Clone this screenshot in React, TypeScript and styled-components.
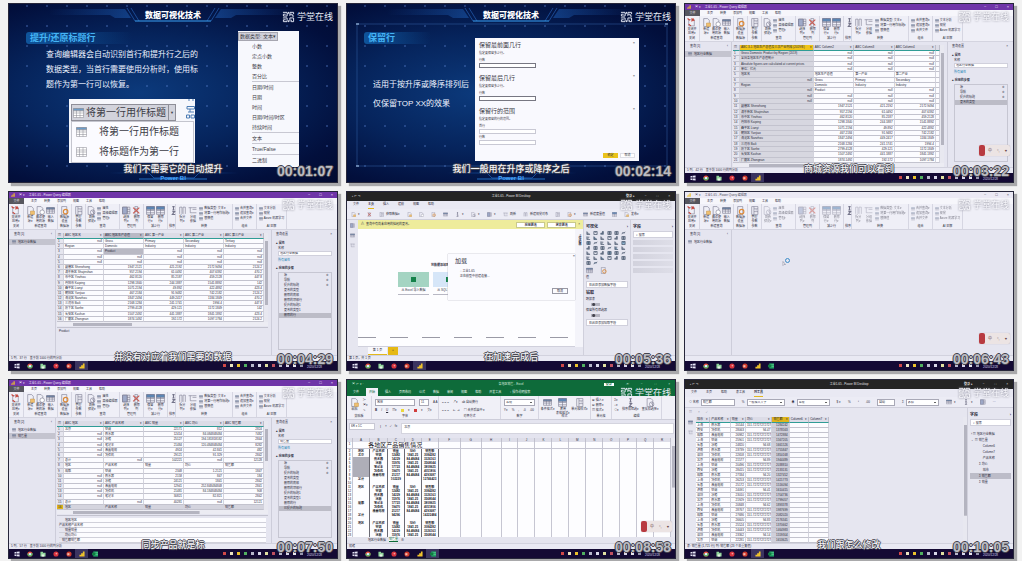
import React from "react";
import styled, { createGlobalStyle, css } from "styled-components";

const GlobalStyle = createGlobalStyle`
  * { box-sizing: border-box; }
  body {
    margin: 0;
    background: #f2f2f2;
    font-family: "Liberation Sans", "Noto Sans CJK SC", sans-serif;
    line-height: 1;
    color: #2c2c3c;
  }
  button, input, select { font: inherit; color: inherit; margin: 0; border-radius: 0; }
  button { border: 0; padding: 0; background: none; }
  p, h2, h3, ul, figure { margin: 0; padding: 0; }
  ul { list-style: none; }
  a { text-decoration: none; }
  table { border-spacing: 0; }
  td, th { padding: 0; font-weight: 400; }
  svg { display: block; flex: none; }
`;

/* ---------- gallery ---------- */

const Gallery = styled.main`
  display: grid;
  grid-template-columns: repeat(3, 1fr);
  gap: 8px;
  padding: 3px 8px 2px;
`;

const Frame = styled.figure`
  position: relative;
  display: flex;
  flex-direction: column;
  aspect-ratio: 330 / 180;
  min-width: 0;
  overflow: hidden;
  border: 1px solid #26263a;
  font-size: 3px;
`;

const Shadow = styled.div`
  min-width: 0;
  box-shadow: 3px 3px 1px #a9a9ab;
`;

const outline = css`
  text-shadow: 1px 0 0 #44444e, -1px 0 0 #44444e, 0 1px 0 #44444e, 0 -1px 0 #44444e;
`;

const Caption = styled.figcaption`
  position: absolute;
  left: 0;
  right: 0;
  bottom: 8px;
  text-align: center;
  font-size: 9px;
  font-weight: 500;
  color: #f4f4f8;
  ${outline}
`;

const Timecode = styled.time`
  position: absolute;
  right: 4px;
  bottom: 4px;
  font-size: 14px;
  font-weight: 700;
  color: #bcbcc2;
  ${outline}
`;

const Mark = styled.div<{ $light?: boolean }>`
  position: absolute;
  right: 4px;
  top: 7px;
  display: flex;
  align-items: center;
  gap: 2px;
  font-size: 9px;
  color: ${(p) => (p.$light ? "#f6f6fb" : "#e8edf8")};
  filter: ${(p) => (p.$light ? "drop-shadow(0 0 1px #80808f)" : "none")};
`;

const Watermark = ({ light }: { light?: boolean }) => (
  <Mark $light={light}>
    <svg width="13" height="12" viewBox="0 0 28 24" fill="none" stroke="currentColor" strokeWidth="2">
      <path d="M2 2h9v8H3V6h5M17 10V2h8v4M17 6h5v4h4M2 14h9v8H3v-4h5M17 22v-8h8v8h-5v-4M11 5h2M14 1v4M14 19v4" />
    </svg>
    学堂在线
  </Mark>
);

type ShotProps = {
  time: string;
  caption?: string;
  light?: boolean;
  ime?: boolean;
  children: React.ReactNode;
};

const Ime = styled.div`
  position: absolute;
  right: 3px;
  bottom: 26px;
  display: flex;
  width: 31px;
  height: 11px;
  align-items: center;
  gap: 5px;
  border-radius: 2px;
  background: #ece4e4;
  box-shadow: 0 0 1px #a8a0a8;
  font-size: 4px;
  color: #6a4444;
  &::before {
    content: "";
    width: 6px;
    height: 11px;
    margin-right: -2px;
    border-radius: 2px;
    background: #b83a40;
  }
`;

const Shot = ({ time, caption, light, ime, children }: ShotProps) => (
  <Shadow>
    <Frame>
      {children}
      {ime && (
        <Ime>
          <span>中</span>
          <span>°,</span>
          <span>♥</span>
        </Ime>
      )}
      <Watermark light={light} />
      {caption && <Caption>{caption}</Caption>}
      <Timecode>{time}</Timecode>
    </Frame>
  </Shadow>
);

/* ---------- slides ---------- */

const Slide = styled.div`
  flex: 1;
  position: relative;
  display: flex;
  flex-direction: column;
  background:
    radial-gradient(circle, rgba(90, 130, 210, 0.35) 0 1px, transparent 1px) 8px 12px / 20px 20px,
    radial-gradient(ellipse at 40% 50%, #0c3a7c 0%, #06245c 45%, #020f3c 80%, #010a30 100%);
  color: #eef3ff;
`;

const Hud = styled.svg`
  position: absolute;
  inset: 0;
  width: 100%;
  height: 100%;
`;

const SlideHud = ({ framed }: { framed?: boolean }) => (
  <Hud viewBox="0 0 328 178" preserveAspectRatio="none" fill="none">
    <defs>
      <linearGradient id="beam" x1="0" x2="1">
        <stop offset="0" stopColor="#1c62c0" stopOpacity="0" />
        <stop offset=".5" stopColor="#2a7ade" stopOpacity=".9" />
        <stop offset="1" stopColor="#1c62c0" stopOpacity="0" />
      </linearGradient>
    </defs>
    <path d="M40 5h76l6 9h-16l-5-3H40zM288 5h-76l-6 9h16l5-3h61z" fill="url(#beam)" opacity=".7" />
    <path d="M118 4l8 13M122 4l8 13M210 4l-8 13M206 4l-8 13" stroke="#2a6ac4" opacity=".6" />
    <path d="M126 17h76" stroke="#3aa0f4" />
    <path d="M100 169h40l5 5h40l5-5h40" stroke="url(#beam)" />
    <path d="M130 175h68" stroke="#2a86e0" opacity=".8" />
    {framed && <rect x="10" y="20" width="310" height="142" stroke="#3a6cb4" opacity=".45" />}
    {framed && <path d="M9 20h3M9 162h3M318 20h3" stroke="#bcdcff" />}
  </Hud>
);

const SlideTitle = styled.h2`
  position: relative;
  padding-top: 7px;
  text-align: center;
  font-size: 8px;
  line-height: 9px;
  font-weight: 900;
  color: #ffffff;
`;

const SlideHeading = styled.h3`
  position: relative;
  align-self: flex-start;
  margin: 12px 0 0 17px;
  padding: 0 36px 0 4px;
  font-size: 9px;
  line-height: 12px;
  font-weight: 700;
  color: #45b4f4;
  border-radius: 3px;
  background: linear-gradient(90deg, #0f559c, rgba(15, 85, 156, 0));
`;

const SlideFoot = styled.p`
  position: absolute;
  left: 0;
  right: 0;
  bottom: 1px;
  text-align: center;
  font-size: 6px;
  font-weight: 700;
  color: #4aa8ff;
`;

const SlideText = styled.p<{ $line: number; $top: number; $left: number }>`
  position: relative;
  margin: ${(p) => p.$top}px 0 0 ${(p) => p.$left}px;
  font-size: 8px;
  line-height: ${(p) => p.$line}px;
  white-space: pre-line;
`;

const PromoteShot = styled.div`
  position: absolute;
  left: 60px;
  top: 95px;
  width: 126px;
  height: 64px;
  padding: 5px 1px 0 2px;
  background: #f6f7fc;
  color: #3c3c46;
  font-size: 10px;
`;

const Combo = styled.button`
  display: flex;
  align-items: center;
  gap: 2px;
  width: 105px;
  height: 17px;
  padding-left: 1px;
  border: 1px solid #8e8e98;
  background: #d2d3dc;
  white-space: nowrap;
`;

const ComboArrow = styled.span`
  align-self: stretch;
  width: 9px;
  margin-left: auto;
  border-left: 1px solid #8e8e98;
  font-size: 4px;
  line-height: 15px;
  text-align: center;
`;

const ComboMenu = styled.ul`
  border: 1px solid #c4c5ce;
  background: #fbfbff;
`;

const ComboItem = styled.li`
  display: flex;
  align-items: center;
  gap: 12px;
  height: 20px;
  padding-left: 4px;
`;

const Diagram = styled.svg`
  position: absolute;
  right: 0;
  top: 0;
`;

const TypeMenu = styled.div`
  position: absolute;
  left: 229px;
  top: 27px;
  width: 61px;
  height: 136px;
  background: #f7f8fd;
  color: #3a3a44;
  font-size: 5px;
`;

const TypeButton = styled.button`
  display: block;
  width: 40px;
  height: 9px;
  margin-top: 1px;
  border: 1px solid #a6a6b0;
  background: #cfd0da;
  white-space: nowrap;
`;

const TypeItem = styled.li<{ $rule?: boolean }>`
  height: ${(p) => (p.$rule ? 11 : 10)}px;
  margin-left: 14px;
  line-height: 11px;
  border-bottom: 1px solid ${(p) => (p.$rule ? "#c8c8d2" : "transparent")};
`;

const SheetIcon = ({ blue }: { blue?: boolean }) => (
  <svg width="11" height="10" viewBox="0 0 22 20" fill="#fff" stroke="#85858f">
    <path d="M1 1h20v18H1zM1 6h20M1 10h20M1 15h20M7 1v18M14 1v18" />
    {blue && <path d="M1 1h20v4H1z" fill="#6d9dc9" />}
  </svg>
);

const types: [string, boolean?][] = [
  ["小数"], ["定点小数"], ["整数"], ["百分比", true], ["日期/时间"], ["日期"], ["时间"],
  ["日期/时间/时区"], ["持续时间", true], ["文本", true], ["True/False", true], ["二进制"],
];

const PromoteSlide = () => (
  <Slide>
    <SlideHud />
    <SlideTitle>数据可视化技术</SlideTitle>
    <SlideHeading>提升/还原标题行</SlideHeading>
    <SlideText $line={15} $top={3} $left={37}>
      {"查询编辑器会自动识别首行和提升行之后的\n数据类型，当首行需要使用分析时，使用标\n题作为第一行可以恢复。"}
    </SlideText>
    <PromoteShot>
      <Combo><SheetIcon blue />将第一行用作标题<ComboArrow>▼</ComboArrow></Combo>
      <ComboMenu>
        <ComboItem><SheetIcon blue />将第一行用作标题</ComboItem>
        <ComboItem><SheetIcon />将标题作为第一行</ComboItem>
      </ComboMenu>
      <Diagram width="9" height="22" viewBox="0 0 18 44" fill="none" stroke="#4c7cb4" strokeWidth="2">
        <path d="M4 2h4M12 2h4M2 15h15v5H2zM8 20v6M4 26h12M1 32h6v6H1zM10 32h7v6h-7z" />
      </Diagram>
    </PromoteShot>
    <TypeMenu>
      <TypeButton>数据类型: 文本▾</TypeButton>
      <ul>{types.map(([t, rule]) => <TypeItem key={t} $rule={rule}>{t}</TypeItem>)}</ul>
    </TypeMenu>
    <SlideFoot>Power BI</SlideFoot>
  </Slide>
);

const KeepShot = styled.div`
  position: absolute;
  left: 128px;
  top: 34px;
  width: 164px;
  height: 123px;
  padding: 3px 4px;
  background: #f9f9fe;
  color: #3a3a46;
`;

const KeepForm = styled.div`
  position: relative;
  height: 33px;
  font-size: 3px;
`;

const KeepTitle = styled.h3`
  font-size: 6px;
  line-height: 8px;
  font-weight: 400;
`;

const KeepHint = styled.p`
  line-height: 8px;
`;

const Field = styled.label<{ $soft?: boolean }>`
  display: block;
  width: 57px;
  line-height: 6px;
  input {
    display: block;
    width: 100%;
    height: 5px;
    padding: 0 1px;
    border: 1px solid ${(p) => (p.$soft ? "#c9c9d4" : "#777782")};
    background: #fff;
  }
`;

const Cross = styled.button`
  position: absolute;
  right: 0;
  top: 0;
  font-size: 4px;
`;

const Actions = styled.div`
  position: absolute;
  right: 4px;
  bottom: 3px;
  display: flex;
  gap: 2px;
`;

const Action = styled.button<{ $main?: boolean }>`
  width: 15px;
  height: 5px;
  border: 1px solid ${(p) => (p.$main ? "#eac31c" : "#dedee6")};
  background: ${(p) => (p.$main ? "#eac31c" : "#fff")};
  line-height: 3px;
`;

const KeepSlide = () => (
  <Slide>
    <SlideHud framed />
    <SlideTitle>数据可视化技术</SlideTitle>
    <SlideHeading>保留行</SlideHeading>
    <SlideText $line={19} $top={31} $left={26}>{"适用于按升序或降序排列后\n仅保留TOP XX的效果"}</SlideText>
    <KeepShot>
      <KeepForm>
        <KeepTitle>保留最前面几行</KeepTitle>
        <KeepHint>指定要保留多少行。</KeepHint>
        <Field>行数<input /></Field>
        <Cross>×</Cross>
      </KeepForm>
      <KeepForm>
        <KeepTitle>保留最后几行</KeepTitle>
        <KeepHint>指定要保留多少行。</KeepHint>
        <Field>行数<input /></Field>
        <Cross>×</Cross>
      </KeepForm>
      <KeepForm>
        <KeepTitle>保留行的范围</KeepTitle>
        <KeepHint>指定要保留的行的范围。</KeepHint>
        <Field $soft>首行<input /></Field>
        <Field $soft>行数<input /></Field>
        <Cross>×</Cross>
      </KeepForm>
      <Actions>
        <Action $main>确定</Action>
        <Action>取消</Action>
      </Actions>
    </KeepShot>
    <SlideFoot>Power BI</SlideFoot>
  </Slide>
);

/* ---------- shared desktop parts ---------- */

const TaskbarRow = styled.footer`
  display: flex;
  align-items: center;
  height: 9px;
  padding: 0 4px 0 1px;
  background: #140a34;
  color: #dcdcf0;
`;

const TaskApp = styled.button<{ $on?: boolean }>`
  display: grid;
  place-items: center;
  width: 13px;
  height: 9px;
  background: ${(p) => (p.$on ? "#3b3460" : "none")};
`;

const Tray = styled.div`
  display: flex;
  align-items: center;
  gap: 4px;
  margin-left: auto;
`;

const Dot = styled.i<{ $c: string }>`
  width: 3px;
  height: 3px;
  background: ${(p) => p.$c};
`;

const Clock = styled.span`
  margin: 4px 11px 0 0;
`;

const appIcons = [
  <path key="w" d="M1 3l5-1v4H1zM7 2l6-1v5H7zM1 8h5v4l-5-1zM7 8h6v5l-6-1z" fill="#e8e8f8" />,
  <g key="c"><circle cx="7" cy="7" r="6" fill="#e34c3c" /><path d="M7 13A6 6 0 011 5l5 4zM7 13a6 6 0 006-8H8z" fill="#4cb862" /><circle cx="7" cy="7" r="3" fill="#dfe8ff" /></g>,
  <g key="e"><path d="M1 2h6v2h6v9H1z" fill="#8fd49a" /><path d="M4 8h6v5H4z" fill="#e8f4e8" /></g>,
  <g key="f"><circle cx="7" cy="7" r="6" fill="#d8343e" /><circle cx="8" cy="6" r="2" fill="#f2a0a0" /></g>,
  <g key="p"><circle cx="7" cy="7" r="6" fill="#cf3a2c" /><path d="M3 5h5v5H3z" fill="#f3b9ac" /></g>,
  <path key="b" d="M1 9h4v4H1zM5 5h4v8H5zM9 1h4v12H9z" fill="#eec22c" />,
  <g key="x"><path d="M3 1h11v12H3z" fill="#22a565" /><path d="M0 4h8v6H0z" fill="#107c41" /><path d="M8 4h6M8 8h6" stroke="#8fe0b4" /></g>,
];
const appNames = ["开始", "Chrome", "资源管理器", "Firefox", "PowerPoint", "Power BI", "Excel"];
const trayColors = ["#d04848", "#ece4c0", "#ecc22c", "#50b060", "#b8b8cc", "#d8d8e8", "#e0e0a0", "#c05060", "#b8b8cc", "#d8d8ec", "#e8e8f0", "#9898b0"];

const Taskbar = ({ excel, active }: { excel?: boolean; active?: number }) => (
  <TaskbarRow>
    {appIcons.slice(0, excel ? 7 : 6).map((icon, i) => (
      <TaskApp key={i} $on={i === active} aria-label={appNames[i]}>
        <svg width="6" height="6" viewBox="0 0 14 14">{icon}</svg>
      </TaskApp>
    ))}
    <Tray>
      {trayColors.map((c, i) => <Dot key={i} $c={c} />)}
      <Clock>2020/12/28</Clock>
    </Tray>
  </TaskbarRow>
);

const Status = styled.div`
  height: 6px;
  padding: 0 2px;
  border-top: 1px solid #d2d2de;
  background: #e9e9f3;
  line-height: 5px;
`;

type IconKind = "close" | "doc" | "clock" | "table" | "gear" | "list" | "refresh" | "cols" | "cut" | "rows" | "sort" | "split" | "group";

const iconArt: Record<IconKind, React.ReactNode> = {
  close: <><path d="M3 3h10v11H3z" /><path d="M1 1l4 3M12 1l-4 5M13 5l-5-4M3 11l4 3" stroke="#c8443a" strokeWidth="2" /></>,
  doc: <><path d="M3 1h7l3 3v11H3z" /><path d="M8 9h7v6H8z" fill="#f0c070" stroke="#c89850" /></>,
  clock: <><path d="M2 1h7l3 3v11H2z" /><circle cx="11" cy="11" r="4" fill="#fff" /></>,
  table: <><path d="M1 3h14v10H1zM1 6h14M1 9h14M6 3v10M11 3v10" /><path d="M1 3h14v2H1z" fill="#5580ae" /></>,
  gear: <><path d="M3 1h9v14H3z" /><circle cx="10" cy="10" r="4" stroke="#dc8a38" strokeWidth="2" /></>,
  list: <path d="M3 1h11v14H3zM7 1v14M7 5h7M7 10h7M10 7h2" />,
  refresh: <><path d="M2 1h7l3 3v11H2z" /><path d="M6 11a4 4 0 118 0 4 4 0 01-8 0M9 8l4 6" stroke="#76768c" /></>,
  cols: <><path d="M1 2h13v12H1zM5 2v12M10 2v12M1 6h13M1 10h13" /><path d="M1 2h8v12H1z" fill="#9ea9c8" /></>,
  cut: <><path d="M5 1h5v14H5zM5 5h5M5 10h5" /><path d="M2 3l11 10M13 3L2 13" stroke="#cc5a50" strokeWidth="2" /></>,
  rows: <><path d="M1 1h14v14H1zM1 8h14M1 12h14M8 1v14" /><path d="M1 1h14v5H1z" fill="#5b86b6" /></>,
  sort: <path d="M6 1h4M8 1v6M6 7h4M6 10h4l-4 5h5" strokeWidth="2" />,
  split: <path d="M3 14V2h4v12M9 14V2h4v12" />,
  group: <path d="M1 3h7M4 3v9h4M8 6h7M8 12h7M8 3h7" />,
};

const Icon = ({ kind, size = 9 }: { kind: IconKind; size?: number }) => (
  <svg width={size} height={size} viewBox="0 0 16 16" fill="none" stroke="#74748a">{iconArt[kind]}</svg>
);

/* ---------- Power Query editor ---------- */

const PqTitle = styled.header<{ $plain?: boolean }>`
  display: flex;
  align-items: center;
  gap: 4px;
  height: 6px;
  padding: 0 4px 0 2px;
  background: ${(p) => (p.$plain ? "#ebe9f4" : "#6f35a8")};
  color: ${(p) => (p.$plain ? "#50505e" : "#efe4fb")};
`;

const WinButtons = styled.span`
  display: flex;
  gap: 9px;
  margin-left: auto;
  font-size: 4px;
`;

const PqTabs = styled.nav`
  display: flex;
  align-items: center;
  gap: 7px;
  height: 6px;
  background: #f6f6fb;
  button:first-child {
    width: 15px;
    height: 6px;
    background: #56565e;
    color: #e0e0e8;
  }
`;

const PqRibbon = styled.div`
  display: flex;
  height: 26px;
  border-bottom: 1px solid #d4d4e0;
  background: #efeff7;
  white-space: nowrap;
`;

const RibbonGroup = styled.section<{ $w: number }>`
  display: flex;
  flex-direction: column;
  justify-content: space-between;
  width: ${(p) => p.$w}px;
  padding: 2px 1px 1px;
  border-right: 1px solid #d6d6e2;
  text-align: center;
`;

const GroupTools = styled.div`
  display: flex;
  justify-content: space-around;
`;

const Tool = styled.button<{ $dim?: boolean }>`
  display: flex;
  flex-direction: column;
  align-items: center;
  line-height: 4px;
  white-space: pre-line;
  opacity: ${(p) => (p.$dim ? 0.55 : 1)};
`;

const ToolList = styled.div<{ $dim?: boolean }>`
  display: flex;
  flex-direction: column;
  align-items: flex-start;
  opacity: ${(p) => (p.$dim ? 0.6 : 1)};
  button {
    display: flex;
    align-items: center;
    gap: 1px;
    height: 5px;
  }
`;

type GroupSpec = { w: number; name: string; tools: [IconKind, string][]; list?: string[]; dim?: boolean };
const pqGroups: GroupSpec[] = [
  { w: 15, name: "关闭", tools: [["close", "关闭并\n应用▾"]] },
  { w: 34, name: "新建查询", tools: [["doc", "新建\n源▾"], ["clock", "最近使\n用的源"], ["table", "输入\n数据"]] },
  { w: 14, name: "数据源", tools: [["gear", "数据源\n设置"]] },
  { w: 14, name: "参数", tools: [["list", "管理\n参数"]] },
  { w: 34, name: "查询", tools: [["refresh", "刷新\n预览▾"]], list: ["属性", "高级编辑器", "管理▾"], dim: true },
  { w: 24, name: "管理列", tools: [["cols", "选择\n列▾"], ["cut", "删除\n列"]], dim: true },
  { w: 24, name: "减少行", tools: [["rows", "保留\n行▾"], ["rows", "删除\n行▾"]], dim: true },
  { w: 8, name: "排序", tools: [["sort", ""]] },
  { w: 57, name: "转换", tools: [["split", "拆分\n列▾"], ["group", "分组\n依据"]], list: ["数据类型: 文本▾", "将第一行用作标题▾", "替换值"], dim: true },
  { w: 24, name: "组合", tools: [], list: ["合并查询▾", "追加查询▾", "合并文件"], dim: true },
  { w: 30, name: "AI 见解", tools: [], list: ["文本分析", "视觉", "Azure 机器学习"], dim: true },
];

const PqBody = styled.div`
  flex: 1;
  min-height: 0;
  display: flex;
  background: #e5e5f0;
`;

const PqNav = styled.aside`
  width: 47px;
  border-right: 1px solid #cdcdda;
`;

const NavHead = styled.div`
  display: flex;
  justify-content: space-between;
  height: 9px;
  padding: 3px 3px 0 5px;
`;

const NavItem = styled.button<{ $on?: boolean }>`
  display: flex;
  align-items: center;
  gap: 2px;
  width: 100%;
  height: 6px;
  padding-left: 3px;
  background: ${(p) => (p.$on ? "#c4c4cf" : "none")};
`;

const PqCenter = styled.div`
  flex: 1;
  min-width: 0;
  display: flex;
  flex-direction: column;
  padding: 3px 3px 0 1px;
`;

const TableArea = styled.div`
  flex: 1;
  min-height: 0;
  display: flex;
  background: #fcfcff;
`;

const DataTable = styled.table<{ $cols: string }>`
  flex: 1;
  min-width: 0;
  display: flex;
  flex-direction: column;
  white-space: nowrap;
  tr {
    display: grid;
    grid-template-columns: ${(p) => p.$cols};
    min-height: 0;
    overflow: hidden;
  }
  tbody {
    flex: 1;
    min-height: 0;
    display: grid;
    grid-auto-rows: 1fr;
  }
`;

const HeadCell = styled.th<{ $tone?: string }>`
  display: flex;
  justify-content: space-between;
  align-items: center;
  height: 6px;
  min-width: 0;
  padding: 0 1px;
  overflow: hidden;
  border-right: 1px solid #bdbdc9;
  border-bottom: 1px solid #2f9c96;
  background: ${(p) => p.$tone || "#dcdce7"};
`;

const Cell = styled.td<{ $num?: boolean; $tone?: string }>`
  min-width: 0;
  overflow: hidden;
  padding: 0 1px;
  line-height: 4px;
  text-align: ${(p) => (p.$num ? "right" : "left")};
  border-right: 1px solid #d3d3dd;
  border-bottom: 1px solid #c3c3ce;
  background: ${(p) => p.$tone || "transparent"};
`;

const VScroll = styled.div<{ $to: number }>`
  width: 4px;
  background: linear-gradient(#b4b4c0, #b4b4c0) center 8px / 3px ${(p) => p.$to}% no-repeat #e8e8f0;
`;

const HScroll = styled.div<{ $to: number }>`
  height: 4px;
  background: linear-gradient(#b4b4c0, #b4b4c0) 16px center / ${(p) => p.$to}% 3px no-repeat #ececf3;
`;

const isNumber = (s: string) => /^[\d.]+$|^null$/.test(s);

type PqTableProps = { cols: string; heads: string[]; rows: string[][]; first?: boolean; second?: boolean; last?: boolean; scroll: number };
const PqTable = ({ cols, heads, rows, first, second, last, scroll }: PqTableProps) => {
  const headTone = (i: number) => (first && i === 0 ? "#f0c419" : second && i === 1 ? "#b9b9c5" : undefined);
  const cellTone = (r: number, i: number) => {
    if (first && i === 0) return "#d7d7e0";
    if (second && r === 2 && i === 1) return "#b9b9c4";
    if (last && r === rows.length - 1) return "#d4d4de";
    return undefined;
  };
  return (
    <TableArea>
      <DataTable $cols={cols}>
        <thead>
          <tr>
            <HeadCell>▦</HeadCell>
            {heads.map((h, i) => (
              <HeadCell key={i} $tone={headTone(i)}>{h && <><span>ABC {h}</span><span>▾</span></>}</HeadCell>
            ))}
          </tr>
        </thead>
        <tbody>
          {rows.map((row, r) => (
            <tr key={r}>
              <Cell $tone={last && r === rows.length - 1 ? "#e0b41c" : "#e6e6ef"}>{r + 1}</Cell>
              {row.map((c, i) => <Cell key={i} $num={isNumber(c)} $tone={cellTone(r, i)}>{c}</Cell>)}
            </tr>
          ))}
        </tbody>
      </DataTable>
      <VScroll $to={scroll} />
    </TableArea>
  );
};

const Preview = styled.div`
  height: 28px;
  margin-top: 1px;
  padding: 2px;
  border-top: 1px solid #c3c3cf;
`;

const PreviewTable = styled.table`
  width: 100%;
  background: #fcfcff;
  td { height: 5px; line-height: 4px; border-bottom: 1px solid #d0d0da; }
  td:first-child { width: 12px; text-align: right; background: #e6e6ef; white-space: nowrap; }
`;

const PqSide = styled.aside`
  display: flex;
  flex-direction: column;
  width: 66px;
  padding: 3px 5px 5px 4px;
  border-left: 1px solid #cdcdda;
`;

const SideHead = styled.div`
  display: flex;
  justify-content: space-between;
  height: 8px;
`;

const SideTitle = styled.h3<{ $top?: number }>`
  margin-top: ${(p) => p.$top || 0}px;
  font-size: 3px;
  line-height: 5px;
`;

const SideField = styled.label`
  display: block;
  padding-left: 2px;
  line-height: 5px;
  input {
    display: block;
    width: 100%;
    height: 5px;
    padding: 0 1px;
    border: 1px solid #d0d0dc;
    background: #fff;
  }
`;

const SideLink = styled.a`
  padding: 3px 0 0 2px;
  color: #2a88b8;
`;

const Steps = styled.ul`
  flex: 1;
  margin: 1px 0 0 2px;
  border: 1px solid #c6c6d2;
`;

const Step = styled.li<{ $on?: boolean }>`
  display: flex;
  justify-content: space-between;
  height: 5px;
  padding: 0 2px 0 5px;
  line-height: 5px;
  background: ${(p) => (p.$on ? "#bcbcc7" : "none")};
`;

type PqProps = { plain?: boolean; queries: string[]; name?: string; steps?: string[]; excel?: boolean; status?: string; children?: React.ReactNode };

const PowerQuery = ({ plain, queries, name, steps, excel, status, children }: PqProps) => (
  <>
    <PqTitle $plain={plain}>
      <svg width="4" height="4" viewBox="0 0 14 14"><path d="M1 9h3v4H1zM5 5h3v8H5zM9 1h4v12H9z" fill="#eec22c" /></svg>
      <span>▣ ▾</span>
      <span>工业1-65 - Power Query 编辑器</span>
      <WinButtons><span>−</span><span>□</span><span>×</span></WinButtons>
    </PqTitle>
    <PqTabs>
      {["文件", "主页", "转换", "添加列", "视图", "工具", "帮助"].map((t) => <button key={t}>{t}</button>)}
    </PqTabs>
    <PqRibbon>
      {pqGroups.map((g) => (
        <RibbonGroup key={g.name} $w={g.w}>
          <GroupTools>
            {g.tools.map(([k, t], i) => <Tool key={i} $dim={plain && g.dim} aria-label={t || g.name}><Icon kind={k} />{t}</Tool>)}
            {g.list && (
              <ToolList $dim={plain}>
                {g.list.map((t) => <button key={t}><Icon kind="table" size={4} />{t}</button>)}
              </ToolList>
            )}
          </GroupTools>
          <span>{g.name}</span>
        </RibbonGroup>
      ))}
    </PqRibbon>
    <PqBody>
      <PqNav>
        <NavHead><span>查询 [{queries.length}]</span><span>‹</span></NavHead>
        {queries.map((q, i) => (
          <NavItem key={q} $on={!plain && i === queries.length - 1}><Icon kind="table" size={4} />{q}</NavItem>
        ))}
      </PqNav>
      {children && <PqCenter>{children}</PqCenter>}
      {steps && (
        <PqSide>
          <SideHead><span>查询设置</span><span>×</span></SideHead>
          <SideTitle>▴ 属性</SideTitle>
          <SideField>名称<input defaultValue={name} /></SideField>
          <SideLink href="#properties">所有属性</SideLink>
          <SideTitle $top={4}>▴ 应用的步骤</SideTitle>
          <Steps>
            {steps.map((s, i) => (
              <Step key={s} $on={i === steps.length - 1}><span>{s}</span><span>{i < 3 ? "✲" : ""}</span></Step>
            ))}
          </Steps>
        </PqSide>
      )}
    </PqBody>
    <Status>{status}</Status>
    <Taskbar excel={excel} active={plain ? undefined : 5} />
  </>
);

const Busy = styled.div`
  position: absolute;
  left: 97px;
  top: 66px;
`;

const regionRows: string[][] = [
  ["鼓楼区 Shenzhong", "1947.2121", "421.2192", "2172.9494"],
  ["浦东新区 Shajinshan", "957.2194", "61.0492", "407.6392"],
  ["市中区 Yinzhou", "462.8120", "85.2187", "459.2128"],
  ["丹阳市 Kaiping", "1298.1840", "244.1887", "1541.8892"],
  ["昌平区 Lianyi", "1071.2194", "49.892", "422.4892"],
  ["朝阳区 Yanjiao", "467.2184", "91.9482", "742.2182"],
  ["海淀区 Nanzhou", "1847.2494", "449.2417", "1184.1849"],
  ["三河市 Baili", "2168.1284", "241.1741", "1994.4"],
  ["历下区 Sanhe", "2799.4128", "429.121", "1172.1849"],
  ["长安区 Kashun", "1507.2492", "441.1887", "1841.1892"],
  ["广陵区 Zhongnan", "1874.1492", "192.172", "1097.1784"],
];
const nulls = ["null", "null", "null"];
const rows3: string[][] = [
  ["Gross Domestic Product by Region (2019)", ...nulls, ""],
  ["全国各地区生产总值统计", ...nulls, ""],
  ["Absolute figures are calculated at current prices", ...nulls, ""],
  ["单位：亿元", ...nulls, ""],
  ["地区名", "地区生产总值", "第一产业", "第二产业", ""],
  ["null", "Gross", "Primary", "Secondary", ""],
  ["Region", "Domestic", "Industry", "Industry", ""],
  ["null", "Product", "null", "null", ""],
  ["null", ...nulls, ""],
  ["null", ...nulls, ""],
  ...regionRows.map((r) => [...r, ""]),
];
const rows4: string[][] = [
  ["null", "Gross", "Primary", "Secondary", "Tertiary"],
  ["Region", "Domestic", "Industry", "Industry", "Industry"],
  ["null", "Product", "null", "null", "null"],
  ["null", ...nulls, "null"],
  ["null", ...nulls, "null"],
  ...regionRows.map((r, i) => [...r, ["2124.2", "470.2", "447.8", "142", "423.4"][i % 5]]),
];
const rows7: string[][] = [
  ["北京", "空调", "22171", "812", "2824"],
  ["null", "热水器", "12414", "84.084848484", "7482"],
  ["null", "冰箱", "25127", "194.181818182", "2844"],
  ["null", "笔记本", "21484", "120.484848484", "8282"],
  ["null", "液晶电视", "4924", "42.841", "482"],
  ["null", "洗衣机", "29121", "91.329", "2842"],
  ["总计", "null", "102221", "null", "12128"],
  ["地区", "产品名称", "销量", "均价", "销售额"],
  ["成都", "空调", "2348", "1.2121", "1847"],
  ["null", "热水器", "2158", "847", "184"],
  ["null", "冰箱", "24121", "1841", "2842"],
  ["null", "液晶电视", "12941", "252.848484848", "2841"],
  ["null", "洗衣机", "21481", "84.184848484", "908"],
  ["null", "笔记本", "30821", "82.821", "2842"],
  ["总计", "null", "40281", "null", "12121"],
  ["地区", "产品名称", "销量", "均价", "销售额"],
];

/* ---------- Power BI desktop ---------- */

const PbiTitle = styled.header`
  display: grid;
  grid-template-columns: 1fr auto 1fr;
  align-items: center;
  height: 9px;
  padding: 0 5px;
  background: #242424;
  color: #e2e2e2;
  > span:last-child { display: flex; gap: 10px; justify-content: flex-end; }
`;

const PbiTabs = styled.nav`
  display: flex;
  gap: 9px;
  height: 8px;
  padding-left: 6px;
  background: #e9e9f3;
`;

const PbiTab = styled.button<{ $on?: boolean }>`
  border-bottom: 1px solid ${(p) => (p.$on ? "#e2b81c" : "transparent")};
  font-weight: ${(p) => (p.$on ? 700 : 400)};
`;

const PbiTools = styled.div`
  display: flex;
  align-items: center;
  gap: 7px;
  height: 11px;
  padding: 0 4px;
  border-bottom: 1px solid #d0d0dc;
  background: #ececf5;
  white-space: nowrap;
  button { display: flex; align-items: center; gap: 2px; }
  label { display: flex; align-items: center; gap: 2px; }
`;

const ToolInput = styled.input<{ $w: number }>`
  width: ${(p) => p.$w}px;
  height: 7px;
  padding: 0 1px;
  border: 1px solid #a8a8b6;
  background: #fff;
`;

const ToolSelect = styled.select<{ $w: number }>`
  width: ${(p) => p.$w}px;
  height: 7px;
  padding: 0 1px;
  border: 1px solid #a8a8b6;
  background: linear-gradient(#666, #666) right 2px center / 2px 1px no-repeat #fff;
  appearance: none;
`;

const PbiBody = styled.div`
  flex: 1;
  min-height: 0;
  display: flex;
  background: #e6e6f0;
`;

const Rail = styled.nav`
  display: flex;
  flex-direction: column;
  align-items: center;
  gap: 5px;
  width: 11px;
  padding-top: 3px;
`;

const ReportArea = styled.section`
  flex: 1;
  min-width: 0;
  display: flex;
  flex-direction: column;
`;

const Notice = styled.div`
  display: flex;
  align-items: center;
  gap: 2px;
  height: 9px;
  padding: 0 3px;
  background: #eeec9c;
  p { margin-right: auto; }
`;

const NoticeButton = styled.button`
  width: 29px;
  height: 6px;
  border: 1px solid #c9c98c;
  background: #fff;
  font-weight: 700;
  line-height: 4px;
`;

const CanvasRow = styled.div`
  flex: 1;
  min-height: 0;
  display: flex;
`;

const Canvas = styled.div`
  position: relative;
  flex: 1;
  border-bottom: 1px solid #d0d0dc;
  background: linear-gradient(90deg, #9a9aa6 55%, transparent 55%) 0 108px / 32px 1px repeat-x #fdfdff;
`;

const Cards = styled.div`
  position: absolute;
  left: 40px;
  top: 35px;
  text-align: center;
  > div { display: flex; gap: 4px; }
  h3 { margin-bottom: 5px; font-size: 3px; padding-left: 24px; }
`;

const Card = styled.button<{ $c: string }>`
  width: 31px;
  border-bottom: 1px solid #b8b8c4;
  line-height: 7px;
  white-space: nowrap;
  &::before {
    content: "";
    display: block;
    height: 15px;
    background: linear-gradient(#14824a, #14824a) center / 5px 5px no-repeat ${(p) => p.$c};
  }
`;

const Dialog = styled.div`
  position: absolute;
  left: 90px;
  right: 0;
  top: 25px;
  height: 46px;
  padding: 4px 7px;
  background: #fbfbff;
  box-shadow: 0 0 1px #8a8a98;
  h3 { font-size: 6px; font-weight: 400; }
  p { padding-left: 5px; line-height: 5px; }
  p:first-of-type { padding-top: 5px; }
`;

const DialogButton = styled.button`
  position: absolute;
  right: 7px;
  bottom: 6px;
  width: 16px;
  height: 6px;
  border: 1px solid #9898a4;
  line-height: 4px;
`;

const FilterStrip = styled.div`
  width: 8px;
  padding: 5px 2px 0;
  background: #f4f4fa;
  font-weight: 700;
  writing-mode: vertical-rl;
`;

const PageTabs = styled.nav`
  display: flex;
  gap: 1px;
  height: 8px;
  padding-left: 10px;
  button { width: 19px; background: #f8f8fc; border-bottom: 1px solid #e2b81c; }
  button:last-child { width: 10px; background: #e6b914; }
`;

const Pane = styled.aside<{ $w: number }>`
  display: flex;
  flex-direction: column;
  gap: 2px;
  width: ${(p) => p.$w}px;
  padding: 4px 2px 2px;
  border-left: 1px solid #d0d0dc;
`;

const PaneHead = styled.h3`
  display: flex;
  justify-content: space-between;
  font-size: 4px;
  line-height: 5px;
`;

const PaneInput = styled.input`
  flex: none;
  width: 100%;
  height: 7px;
  padding: 0 2px;
  border: 1px solid #d0d0dc;
  background: #fff;
`;

const VizGrid = styled.div`
  display: grid;
  grid-template-columns: repeat(6, 5px);
  gap: 1px 2px;
`;

const Toggle = styled.label`
  display: flex;
  flex-direction: column;
  gap: 2px;
  line-height: 4px;
  input {
    appearance: none;
    width: 9px;
    height: 3px;
    margin-left: 5px;
    background: radial-gradient(circle at 30% 50%, #44444e 0 1px, #b4b4c0 2px);
  }
`;

const Skeleton = styled.div`
  height: 5px;
  background: linear-gradient(90deg, #d2d2dd, #dedee8);
`;

const vizPaths = ["M1 1v8h8M3 8V3M6 8V5", "M1 1v8h8M2 3h5M2 6h3", "M1 8l3-5 2 3 3-4", "M1 1h8v8H1zM1 5h8M5 1v8", "M1 9V5h2v4M5 9V1h2v8", "M1 1h8v8H1zM3 3h4"];

const PowerBi = () => (
  <>
    <PbiTitle><span>▪ ↶ ↷</span><span>工业1-65 - Power BI Desktop</span><span><b>登录 ●</b><i>−</i><i>□</i><i>×</i></span></PbiTitle>
    <PbiTabs>{["文件", "主页", "插入", "建模", "视图", "帮助"].map((t, i) => <PbiTab key={t} $on={i === 1}>{t}</PbiTab>)}</PbiTabs>
    <PbiTools>
      <button aria-label="粘贴"><Icon kind="doc" size={5} />▾</button>
      <button aria-label="剪切"><Icon kind="cut" size={5} /></button>
      <button><Icon kind="list" size={5} />获取数据▾</button>
      {(["doc", "clock", "gear", "table", "sort", "refresh", "cols"] as IconKind[]).map((k, i) => (
        <button key={i} aria-label={k}><Icon kind={k} size={5} />{i > 3 ? "▾" : ""}</button>
      ))}
      <button><Icon kind="group" size={5} />刷新</button>
      <button><Icon kind="split" size={5} />新建视觉对象</button>
      <button aria-label="文本框"><Icon kind="list" size={5} /></button>
      <button aria-label="更多视觉对象"><Icon kind="gear" size={5} />▾</button>
      <button><Icon kind="table" size={5} />新建度量值</button>
      <button aria-label="快度量值"><Icon kind="rows" size={5} /></button>
      <button><Icon kind="doc" size={5} />发布▾</button>
    </PbiTools>
    <PbiBody>
      <Rail><Icon kind="cols" size={5} /><Icon kind="table" size={5} /><Icon kind="group" size={5} /></Rail>
      <ReportArea>
        <Notice>
          <span>⚠</span><p>查询中有尚未应用的挂起的更改。</p>
          <NoticeButton>应用更改</NoticeButton><NoticeButton>放弃更改</NoticeButton><button>×</button>
        </Notice>
        <CanvasRow>
          <Canvas>
            <Cards>
              <h3>将数据添加到报表</h3>
              <div><Card $c="#a4d4c2">从 Excel 导入数据</Card><Card $c="#d6e6f8">从 SQL 导入数据</Card></div>
            </Cards>
            <Dialog>
              <h3>加载</h3>
              <p>◌ 工业1-65</p>
              <p>正在模型中创建连接...</p>
              <DialogButton>取消</DialogButton>
              <Cross>×</Cross>
            </Dialog>
          </Canvas>
          <FilterStrip>« 筛选器</FilterStrip>
        </CanvasRow>
        <PageTabs><button>第 1 页</button><button>+</button></PageTabs>
      </ReportArea>
      <Pane $w={47}>
        <PaneHead><span>可视化</span><span>›</span></PaneHead>
        <VizGrid>
          {Array.from({ length: 38 }, (_, i) => (
            <svg key={i} width="5" height="4" viewBox="0 0 10 10" fill={i % 5 === 2 ? "#8fb8d4" : "none"} stroke="#4c5a70" strokeWidth="2"><path d={vizPaths[(i * 5 + (i >> 2)) % 6]} /></svg>
          ))}
        </VizGrid>
        <VizGrid><Icon kind="table" size={7} /><span /><Icon kind="gear" size={7} /></VizGrid>
        <span>值</span>
        <PaneInput aria-label="值" defaultValue="在此处添加数据字段" />
        <PaneHead>钻取</PaneHead>
        <Toggle>跨报表<input type="checkbox" /></Toggle>
        <Toggle>保留所有筛选器<input type="checkbox" /></Toggle>
        <PaneInput aria-label="钻取字段" defaultValue="在此处添加钻取字段" />
      </Pane>
      <Pane $w={45}>
        <PaneHead><span>字段</span><span>›</span></PaneHead>
        <PaneInput aria-label="搜索" defaultValue="⌕ 搜索" />
        <Skeleton /><Skeleton /><Skeleton /><Skeleton /><Skeleton />
      </Pane>
    </PbiBody>
    <Status>第 1 页，共 1 页</Status>
    <Taskbar active={5} />
  </>
);

/* ---------- Power BI data view ---------- */

const FormulaRow = styled.div`
  display: flex;
  gap: 6px;
  align-items: center;
  height: 9px;
  padding: 0 4px;
  color: #8a8a98;
`;

const DataArea = styled.section`
  flex: 1;
  min-width: 0;
  display: flex;
  flex-direction: column;
`;

const DataRow = styled.div`
  flex: 1;
  min-height: 0;
  display: flex;
`;

const NarrowTable = styled.div`
  flex: 0 0 47%;
  display: flex;
  min-width: 0;
  margin-right: auto;
  background: #fcfcff;
`;

const Tree = styled.ul`
  margin: 3px 0 0;
`;

const TreeItem = styled.li<{ $deep?: boolean; $on?: boolean }>`
  height: 6px;
  padding-left: ${(p) => (p.$deep ? 9 : 1)}px;
  line-height: 6px;
  background: ${(p) => (p.$on ? "#bcbcc8" : "none")};
`;

const cities = ["上海", "上海", "深圳", "西安", "长春", "北京", "成都", "济南"];
const products = ["热水器", "空调", "洗衣机", "冰箱", "液晶电视"];
const rows9 = Array.from({ length: 24 }, (_, i) => [
  cities[(i * 3) % 8],
  products[(i * 2) % 5],
  String(20144 + ((i * 7919) % 9000)),
  i % 3 === 1 ? "94." + ((i * 37) % 90 + 10) : "151.72727272727",
  String(1284242 + ((i * 94321) % 900000)),
  "", "",
]);
const heads9 = ["城市", "产品名称", "销量", "均价", "销售额", "Column6", "Column7"];

const DataView = () => (
  <>
    <PbiTitle><span>▪ ↶ ↷</span><span>工业1-65 - Power BI Desktop</span><span><b>登录 ●</b><i>−</i><i>□</i><i>×</i></span></PbiTitle>
    <PbiTabs>{["文件", "主页", "帮助", "表工具", "列工具"].map((t, i) => <PbiTab key={t} $on={i === 4}>{t}</PbiTab>)}</PbiTabs>
    <PbiTools>
      <label>◇ 名称<ToolInput $w={34} defaultValue="销售额" /></label>
      <label>%<ToolSelect $w={38}><option>一般格式文字</option></ToolSelect></label>
      <label>◉<ToolSelect $w={33}><option>常规</option></ToolSelect></label>
      <span>$ ▾</span><span>%</span><span>❜</span><span>.00</span>
      <ToolInput $w={18} aria-label="小数位" defaultValue="自动" />
      <label>Σ<ToolSelect $w={33}><option>求和</option></ToolSelect></label>
      <button aria-label="数据类别"><Icon kind="table" size={6} />▾</button>
      <button aria-label="排序"><Icon kind="sort" size={6} />▾</button>
      <button aria-label="新建列"><Icon kind="cols" size={6} /></button>
      <span>···</span>
    </PbiTools>
    <PbiBody>
      <DataArea>
        <FormulaRow><span>▥</span><span>×</span><span>✓</span></FormulaRow>
        <DataRow>
          <Rail><Icon kind="table" size={5} /><Icon kind="group" size={5} /></Rail>
          <NarrowTable>
            <DataTable $cols="14fr 20fr 15fr 26fr 17fr 19fr 19fr">
              <thead><tr>{heads9.map((h, i) => <HeadCell key={h} $tone={i === 4 ? "#e0b41c" : undefined}><span>{h}</span><span>▾</span></HeadCell>)}</tr></thead>
              <tbody>
                {rows9.map((row, r) => (
                  <tr key={r}>{row.map((c, i) => <Cell key={i} $num={isNumber(c)} $tone={i === 4 ? "#cfcfda" : undefined}>{c}</Cell>)}</tr>
                ))}
              </tbody>
            </DataTable>
          </NarrowTable>
          <VScroll $to={72} />
        </DataRow>
      </DataArea>
      <Pane $w={46}>
        <PaneHead><span>字段</span><span>›</span></PaneHead>
        <PaneInput aria-label="搜索" defaultValue="⌕ 搜索" />
        <Tree>
          <TreeItem>› ▦ 地区行业数据</TreeItem>
          <TreeItem>⌄ ▦ 销售量</TreeItem>
          <TreeItem $deep>　 Column6</TreeItem>
          <TreeItem $deep>　 Column7</TreeItem>
          <TreeItem $deep>　 产品名称</TreeItem>
          <TreeItem $deep>Σ 均价</TreeItem>
          <TreeItem $deep>　 城市</TreeItem>
          <TreeItem $deep $on>Σ 销售额</TreeItem>
          <TreeItem $deep>Σ 销量</TreeItem>
        </Tree>
      </Pane>
    </PbiBody>
    <Status>表: 销售量 (1,721 行) 列: 销售额 (23 个非重复值)</Status>
    <Taskbar excel active={5} />
  </>
);

/* ---------- Excel ---------- */

const XlTitle = styled.header`
  display: grid;
  grid-template-columns: 1fr auto 1fr;
  align-items: center;
  height: 8px;
  padding: 0 5px;
  background: #0e6b3a;
  color: #d6ecdf;
  > span:last-child { display: flex; gap: 12px; justify-content: flex-end; }
  b { background: #fff; color: #0e6b3a; padding: 0 2px; }
`;

const XlTabs = styled.nav`
  display: flex;
  gap: 6px;
  height: 8px;
  padding-left: 5px;
  background: #0e6b3a;
  color: #e4f4ea;
`;

const XlTab = styled.button<{ $on?: boolean }>`
  padding: 0 ${(p) => (p.$on ? 3 : 1)}px;
  background: ${(p) => (p.$on ? "#f1f1f8" : "none")};
  color: ${(p) => (p.$on ? "#0e6b3a" : "inherit")};
`;

const XlRibbon = styled.div`
  display: flex;
  height: 24px;
  border-bottom: 1px solid #cdcdd9;
  background: #f0f0f7;
  white-space: nowrap;
`;

const XlRow = styled.div`
  display: flex;
  align-items: center;
  gap: 4px;
  height: 8px;
  padding: 0 2px;
`;

const XlFormula = styled.div`
  display: flex;
  gap: 4px;
  height: 18px;
  padding: 3px 1px 4px 2px;
  background: #e4e4ef;
  line-height: 7px;
`;

const NameBox = styled.input`
  width: 26px;
  height: 7px;
  padding: 0 1px;
  border: 1px solid #c8c8d4;
  background: #fff;
`;

const FormulaBox = styled.input`
  flex: 1;
  min-width: 0;
  height: 11px;
  padding: 0 2px 4px;
  border: 1px solid #d4d4de;
  background: #fff;
`;

const XlCell = styled.td<{ $box?: "full" | "side"; $sel?: boolean; $title?: boolean }>`
  min-width: 0;
  line-height: ${(p) => (p.$title ? 6 : 4)}px;
  font-size: ${(p) => (p.$title ? 6 : 3)}px;
  font-weight: ${(p) => (p.$box ? 700 : 400)};
  color: #16161e;
  text-align: center;
  grid-column: ${(p) => (p.$title ? "span 5" : "auto")};
  border-right: 1px solid ${(p) => (p.$box ? "#6a6a74" : "#c6c6d2")};
  border-bottom: 1px solid ${(p) => (p.$box === "full" ? "#84848e" : p.$box ? "transparent" : "#c6c6d2")};
  background: ${(p) => (p.$sel ? "#aeaeb8" : "transparent")};
`;

const XlHead = styled.th`
  height: 4px;
  line-height: 4px;
  border-right: 1px solid #c0c0cc;
  background: #dedee9;
`;

const XlGrid = styled.div`
  flex: 1;
  min-height: 0;
  display: flex;
  background: #fdfdff;
  tbody { grid-template-rows: 7px; }
`;

const SheetTabs = styled.nav`
  display: flex;
  align-items: center;
  gap: 3px;
  height: 6px;
  padding-left: 21px;
  background: #e4e4ee;
  button:nth-child(2) { border-bottom: 1px solid #0e6b3a; background: #fff; color: #0e6b3a; }
`;

const letters = "ABCDEFGHIJKLMNOPQR".split("");
const headRow = ["地区", "产品名称", "销量", "均价", "销售额"];
const block = (city: string, at: number): string[][] =>
  ["空调", "热水器", "冰箱", "笔记本", "洗衣机", "液晶电视"].map((p, i) => [
    i === at ? city : "", p, String(12482 + i * 1747), i % 2 ? "84.48484" : "1841.25", String(3084282 + i * 241881),
  ]);
const xlRows: string[][] = [
  headRow, ...block("北京", 0), ["总计", "", "102229", "", "12746423"], ["", "", "", "", ""],
  headRow, ...block("成都", 3), ["总计", "", "94296", "", "14222484"], ["", "", "", "", ""],
  headRow, ...block("西安", 3).slice(0, 3),
];

const Excel = () => (
  <>
    <XlTitle><span>▣ ↶ ▾ ·</span><span>各地区销售 - Excel</span><span><b>登录</b><i>▣</i><i>−</i><i>□</i><i>×</i></span></XlTitle>
    <XlTabs>
      {["文件", "开始", "插入", "页面布局", "公式", "数据", "审阅", "视图", "帮助", "开发工具", "♀ 操作说明搜索"].map((t, i) => <XlTab key={t} $on={i === 1}>{t}</XlTab>)}
    </XlTabs>
    <XlRibbon>
      <RibbonGroup $w={25}><GroupTools><Tool><Icon kind="doc" />粘贴</Tool><ToolList><button>✂</button><button>▣▾</button><button>✎</button></ToolList></GroupTools>剪贴板</RibbonGroup>
      <RibbonGroup $w={67}>
        <div><XlRow><ToolInput $w={40} aria-label="字体" defaultValue="宋体" /><ToolInput $w={10} aria-label="字号" defaultValue="11" />A A</XlRow>
          <XlRow><b>B</b><i>I</i><u>U</u><span>▦▾</span><Dot $c="#ecd83c" />▾<Dot $c="#d03c3c" />▾<span>文▾</span></XlRow></div>
        字体
      </RibbonGroup>
      <RibbonGroup $w={62}>
        <div><XlRow><span>≡ ≡ ≡</span><span>↗▾</span><span>ab 自动换行</span></XlRow><XlRow><span>≡ ≡ ≡</span><span>⇤ ⇥</span><span>▤ 合并后居中▾</span></XlRow></div>
        对齐方式
      </RibbonGroup>
      <RibbonGroup $w={38}>
        <div><XlRow><ToolSelect $w={33} aria-label="数字格式"><option>常规</option></ToolSelect></XlRow><XlRow><span>¥▾</span><span>%</span><span>,</span><span>.0</span><span>.00</span></XlRow></div>
        数字
      </RibbonGroup>
      <RibbonGroup $w={52}><GroupTools><Tool><Icon kind="table" />条件格式▾</Tool><Tool><Icon kind="rows" />{"套用\n表格格式▾"}</Tool><Tool><Icon kind="list" />单元格样式▾</Tool></GroupTools>样式</RibbonGroup>
      <RibbonGroup $w={21}><ToolList><button>⊞ 插入▾</button><button>⊟ 删除▾</button><button>▦ 格式▾</button></ToolList>单元格</RibbonGroup>
      <RibbonGroup $w={50}><GroupTools><ToolList><button>Σ▾</button><button>↓▾</button><button>◇▾</button></ToolList><Tool><Icon kind="sort" />排序和筛选▾</Tool><Tool><Icon kind="refresh" />查找和选择▾</Tool></GroupTools>编辑</RibbonGroup>
    </XlRibbon>
    <XlFormula><NameBox aria-label="名称框" defaultValue="6R x 1C" /><span>⋮　×　✓　fx</span><FormulaBox aria-label="公式" defaultValue="北京" /></XlFormula>
    <XlGrid>
      <DataTable $cols="6fr 17fr 18fr 17fr 17fr 17fr 22fr 21fr 20fr repeat(10, 17fr)">
        <thead><tr><XlHead />{letters.map((l) => <XlHead key={l}>{l}</XlHead>)}</tr></thead>
        <tbody>
          <tr><XlCell>1</XlCell><XlCell $title>各地区产品销售情况</XlCell>{letters.slice(5).map((l) => <XlCell key={l} />)}</tr>
          {xlRows.map((row, r) => (
            <tr key={r}>
              <XlCell>{r + 2}</XlCell>
              {row.map((c, i) => (
                <XlCell key={i} $box={i === 0 && !/地区|总计/.test(c) ? "side" : "full"} $sel={i === 0 && r > 1 && r < 7}>{c}</XlCell>
              ))}
              {letters.slice(5).map((l) => <XlCell key={l} />)}
            </tr>
          ))}
        </tbody>
      </DataTable>
      <VScroll $to={42} />
    </XlGrid>
    <SheetTabs><button>地区行业数据</button><button>销售量</button><button>⊕</button></SheetTabs>
    <Status>就绪</Status>
    <Taskbar excel active={6} />
  </>
);

/* ---------- page ---------- */

const baseSteps = ["源", "导航", "提升的标题"];
const longSteps = ["源", "导航", "提升的标题", "更改的类型", "删除的底部", "删除的顶部行", "提升的标题1", "更改的类型1", "删除的行"];

const App = () => (
  <>
    <GlobalStyle />
    <Gallery>
      <Shot time="00:01:07" caption="我们不需要它的自动提升"><PromoteSlide /></Shot>
      <Shot time="00:02:14" caption="我们一般用在升序或降序之后"><KeepSlide /></Shot>
      <Shot time="00:03:22" caption="商城资源我们可以看到" light ime>
        <PowerQuery queries={["地区行业数据"]} name="地区行业数据" steps={[...baseSteps, "更改的类型"]} status="5 列、42 行　基于前 1000 行的列分析">
          <PqTable first scroll={78} cols="7px 75fr 41fr 41fr 42fr 4px" heads={["3-1 地区生产总值及三次产业构成 (2019年)", "Column2", "Column3", "Column4", ""]} rows={rows3} />
          <HScroll $to={27} />
        </PowerQuery>
      </Shot>
      <Shot time="00:04:29" caption="并没有对应着我们需要的数据" light>
        <PowerQuery queries={["地区行业数据"]} name="地区行业数据" steps={longSteps} status="5 列、37 行　基于前 1000 行的列分析">
          <PqTable second scroll={72} cols="7px repeat(5, 1fr)" heads={["地区名", "地区生产总值", "第一产业", "第二产业", "第三产业"]} rows={rows4} />
          <HScroll $to={28} />
          <Preview>Product</Preview>
        </PowerQuery>
      </Shot>
      <Shot time="00:05:36" caption="在加速完成后" light><PowerBi /></Shot>
      <Shot time="00:06:43" light ime>
        <PowerQuery plain excel queries={["地区行业数据"]} />
        <Busy>
          <svg width="8" height="8" viewBox="0 0 16 16" fill="none"><circle cx="11" cy="5" r="4" stroke="#3c8cc8" strokeWidth="2" /><path d="M2 7v8l2-2h3z" fill="#fff" stroke="#74748a" /></svg>
        </Busy>
      </Shot>
      <Shot time="00:07:50" caption="同步产品就是标" light>
        <PowerQuery excel queries={["地区行业数据", "销售量"]} name="销售量" steps={[...longSteps, "已提升的标题"]} status="5 列、57 行　基于前 1000 行的列分析">
          <PqTable last scroll={36} cols="7px repeat(5, 1fr)" heads={["地区", "产品名称", "销量", "均价", "销售额"]} rows={rows7} />
          <HScroll $to={60} />
          <Preview>
            <PreviewTable>
              <tbody>{headRow.map((h) => <tr key={h}><td>{h}</td><td>{h}</td></tr>)}</tbody>
            </PreviewTable>
          </Preview>
        </PowerQuery>
      </Shot>
      <Shot time="00:08:58" ime><Excel /></Shot>
      <Shot time="00:10:05" caption="我们跟怎么修改" light><DataView /></Shot>
    </Gallery>
  </>
);

export default App;
